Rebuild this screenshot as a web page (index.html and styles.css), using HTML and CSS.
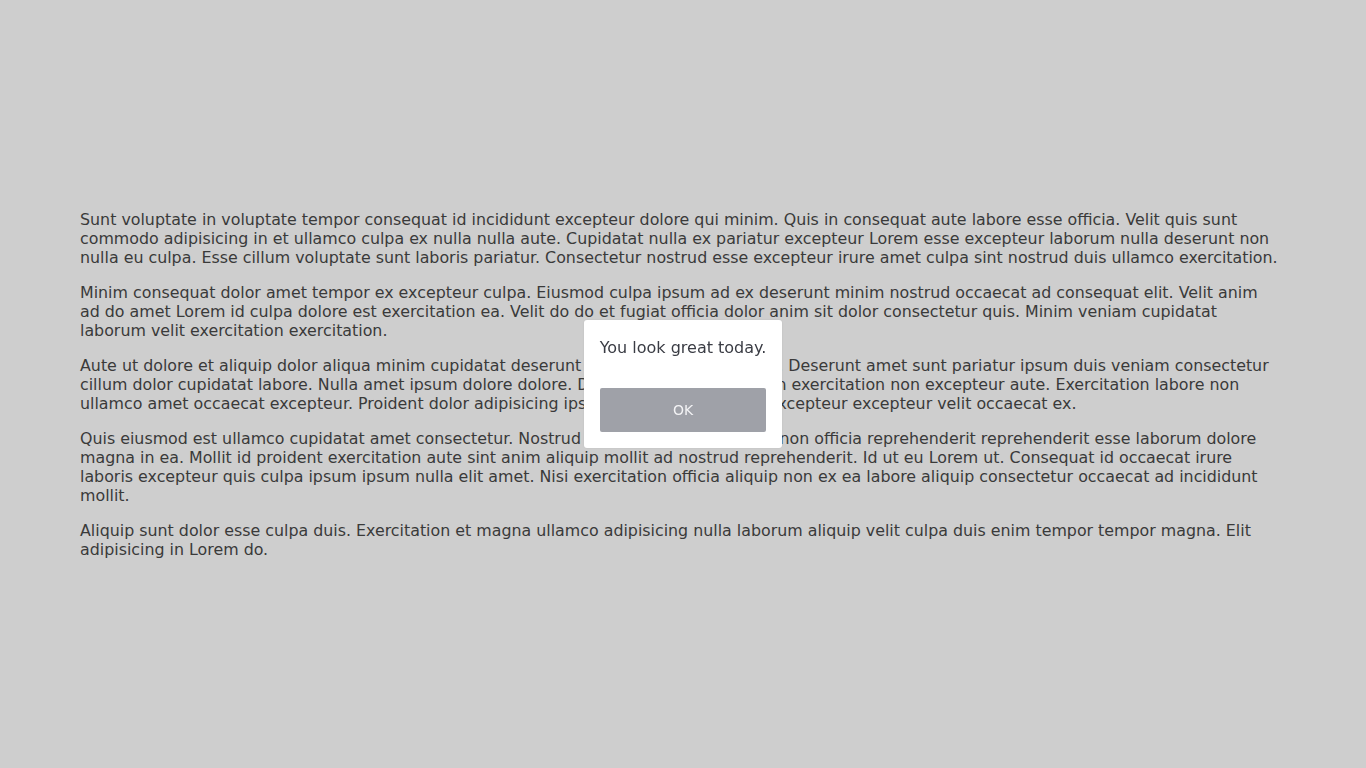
FILE: index.html
```html
<!DOCTYPE html>
<html lang="en">
<head>
<meta charset="utf-8">
<title>Dialog</title>
<link rel="stylesheet" href="styles.css">
</head>
<body>
<main class="content">
<p>Sunt voluptate in voluptate tempor consequat id incididunt excepteur dolore qui minim. Quis in consequat aute labore esse officia. Velit quis sunt commodo adipisicing in et ullamco culpa ex nulla nulla aute. Cupidatat nulla ex pariatur excepteur Lorem esse excepteur laborum nulla deserunt non nulla eu culpa. Esse cillum voluptate sunt laboris pariatur. Consectetur nostrud esse excepteur irure amet culpa sint nostrud duis ullamco exercitation.</p>
<p>Minim consequat dolor amet tempor ex excepteur culpa. Eiusmod culpa ipsum ad ex deserunt minim nostrud occaecat ad consequat elit. Velit anim ad do amet Lorem id culpa dolore est exercitation ea. Velit do do et fugiat officia dolor anim sit dolor consectetur quis. Minim veniam cupidatat laborum velit exercitation exercitation.</p>
<p>Aute ut dolore et aliquip dolor aliqua minim cupidatat deserunt consectetur aliqua anim. Deserunt amet sunt pariatur ipsum duis veniam consectetur cillum dolor cupidatat labore. Nulla amet ipsum dolore dolore. Deserunt elit ipsum sint in exercitation non excepteur aute. Exercitation labore non ullamco amet occaecat excepteur. Proident dolor adipisicing ipsum eu aliquip pariatur excepteur excepteur velit occaecat ex.</p>
<p>Quis eiusmod est ullamco cupidatat amet consectetur. Nostrud tempor laboris eiusmod non officia reprehenderit reprehenderit esse laborum dolore magna in ea. Mollit id proident exercitation aute sint anim aliquip mollit ad nostrud reprehenderit. Id ut eu Lorem ut. Consequat id occaecat irure laboris excepteur quis culpa ipsum ipsum nulla elit amet. Nisi exercitation officia aliquip non ex ea labore aliquip consectetur occaecat ad incididunt mollit.</p>
<p>Aliquip sunt dolor esse culpa duis. Exercitation et magna ullamco adipisicing nulla laborum aliquip velit culpa duis enim tempor tempor magna. Elit adipisicing in Lorem do.</p>
</main>
<div class="overlay">
<div class="dialog" role="dialog">
<p class="dialog-text">You look great today.</p>
<button class="dialog-btn" type="button">OK</button>
</div>
</div>
</body>
</html>
```
FILE: styles.css
```css
html, body {
  margin: 0;
  height: 100%;
}
body {
  background: #cecece;
  color: #3a3a3a;
  font-family: "DejaVu Sans", sans-serif;
  font-size: 15.85px;
  line-height: 19px;
  display: flex;
  align-items: center;
  padding: 0 86px 0 80px;
  box-sizing: border-box;
}
.content {
  flex: 1;
}
.content p {
  margin: 16px 0;
}
.content p:first-child { margin-top: 0; }
.content p:last-child { margin-bottom: 0; }
.overlay {
  position: fixed;
  inset: 0;
  display: flex;
  align-items: center;
  justify-content: center;
}
.dialog {
  background: #ffffff;
  border-radius: 3px;
  padding: 16px;
  display: flex;
  flex-direction: column;
  box-shadow: 0 0 2px rgba(0,0,0,0.08);
}
.dialog-text {
  margin: 0 0 31px;
  padding-top: 2px;
  font-size: 16px;
  color: #3a3c44;
}
.dialog-btn {
  height: 44px;
  border: 0;
  border-radius: 2px;
  background: #9fa1a8;
  color: #f3f3f5;
  font-family: "DejaVu Sans", sans-serif;
  font-size: 14px;
  padding: 0;
}
```
